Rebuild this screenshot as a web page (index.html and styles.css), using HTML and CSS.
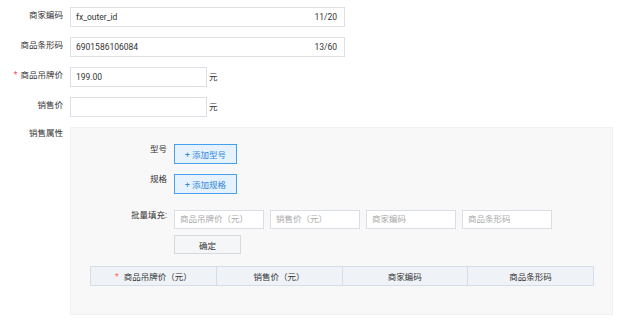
FILE: index.html
```html
<!DOCTYPE html>
<html lang="zh-CN">
<head>
    <meta charset="UTF-8">
    <meta name="viewport" content="width=device-width, initial-scale=1.0">
    <title>商品信息</title>
    <link rel="stylesheet" href="styles.css">
</head>
<body>
    <div class="goods-form">
        <div class="form-row">
            <label class="form-label">商家编码</label>
            <div class="field field-wide">
                <span class="field-value">fx_outer_id</span>
                <span class="field-count">11/20</span>
            </div>
        </div>
        <div class="form-row">
            <label class="form-label">商品条形码</label>
            <div class="field field-wide">
                <span class="field-value">6901586106084</span>
                <span class="field-count">13/60</span>
            </div>
        </div>
        <div class="form-row">
            <label class="form-label"><span class="required">*</span>商品吊牌价</label>
            <div class="field field-short">
                <span class="field-value">199.00</span>
            </div>
            <span class="unit">元</span>
        </div>
        <div class="form-row">
            <label class="form-label">销售价</label>
            <div class="field field-short"></div>
            <span class="unit">元</span>
        </div>
        <div class="form-row sale-attrs">
            <label class="form-label">销售属性</label>
            <div class="attr-panel">
                <div class="attr-row">
                    <span class="attr-label">型号</span>
                    <button class="add-btn">+ 添加型号</button>
                </div>
                <div class="attr-row">
                    <span class="attr-label">规格</span>
                    <button class="add-btn">+ 添加规格</button>
                </div>
                <div class="attr-row batch-row">
                    <span class="attr-label">批量填充:</span>
                    <div class="batch-box">
                        <div class="batch-inputs">
                            <div class="batch-input">商品吊牌价（元）</div>
                            <div class="batch-input">销售价（元）</div>
                            <div class="batch-input">商家编码</div>
                            <div class="batch-input">商品条形码</div>
                        </div>
                        <button class="ok-btn">确定</button>
                    </div>
                </div>
                <table class="sku-table">
                    <thead>
                        <tr>
                            <th><span class="star">*</span>商品吊牌价（元）</th>
                            <th>销售价（元）</th>
                            <th>商家编码</th>
                            <th>商品条形码</th>
                        </tr>
                    </thead>
                </table>
            </div>
        </div>
    </div>
</body>
</html>
```

FILE: styles.css
```css
body {
    margin: 0;
    background-color: #fff;
    color: #333;
    font-family: Roboto, "Noto Sans CJK SC", sans-serif;
    font-size: 8.5px;
}

.goods-form {
    padding-top: 7px;
}

.form-row {
    display: flex;
    align-items: flex-start;
    margin-bottom: 10px;
}

.form-label {
    width: 63px;
    margin-right: 7px;
    text-align: right;
    line-height: 12px;
    padding-top: 2px;
    white-space: nowrap;
}

.required {
    color: #f0506e;
    margin-right: 3px;
}

.field {
    box-sizing: border-box;
    height: 20px;
    border: 1px solid #dcdfe6;
    display: flex;
    align-items: center;
    justify-content: space-between;
    padding: 0 7px 0 5px;
    background-color: #fff;
}

.field-wide {
    width: 275px;
}

.field-short {
    width: 137px;
}

.unit {
    margin-left: 2px;
    line-height: 20px;
}

.sale-attrs .form-label {
    padding-top: 0;
}

.attr-panel {
    box-sizing: border-box;
    width: 543px;
    background-color: #f8f8f8;
    border: 1px solid #f0f0f0;
    padding: 16px 19px 28px 19px;
}

.attr-row {
    display: flex;
    align-items: flex-start;
    margin-bottom: 10px;
}

.attr-label {
    width: 77px;
    margin-right: 7px;
    text-align: right;
    line-height: 11px;
}

.add-btn {
    box-sizing: border-box;
    width: 63px;
    height: 20px;
    border: 1px solid #45a1ed;
    background-color: #e6f2fd;
    color: #2f86d8;
    font-family: inherit;
    font-size: 8.5px;
    padding: 0;
    cursor: pointer;
}

.batch-row {
    margin-top: 16px;
    margin-bottom: 12px;
}

.batch-inputs {
    display: flex;
    gap: 6px;
}

.batch-input {
    box-sizing: border-box;
    width: 90px;
    height: 19px;
    line-height: 17px;
    border: 1px solid #d9dde4;
    background-color: #fff;
    color: #aaa;
    padding-left: 5px;
}

.ok-btn {
    box-sizing: border-box;
    width: 67px;
    height: 19px;
    margin-top: 6px;
    border: 1px solid #d6d9de;
    background-color: #f5f6f7;
    color: #333;
    font-family: inherit;
    font-size: 8.5px;
    padding: 0;
}

.sku-table {
    width: 504px;
    border-collapse: collapse;
    table-layout: fixed;
}

.sku-table th {
    height: 18px;
    padding: 0;
    border: 1px solid #d5dde8;
    background-color: #eff3f8;
    font-weight: normal;
    color: #333;
}

.star {
    color: #ff6a3d;
    margin-right: 5px;
}
```
